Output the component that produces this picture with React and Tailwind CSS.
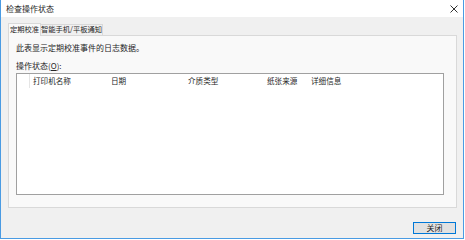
export default function App() {
  const columns = [
    { label: '打印机名称', w: 'w-[78px]' },
    { label: '日期', w: 'w-[77px]' },
    { label: '介质类型', w: 'w-[79px]' },
    { label: '纸张来源', w: 'w-[44px]' },
    { label: '详细信息', w: 'w-[60px]' },
  ];

  return (
    <div className="w-[465px] h-[240px] bg-white overflow-hidden font-['Noto_Sans_CJK_SC','Noto_Sans',sans-serif] text-[8px] leading-none text-[#262626]">
      <div className="w-[464px] h-[239px] flex flex-col bg-[#f0f0f0] border-x border-b border-[#4a9be3]">
        {/* title bar */}
        <div className="h-[17px] bg-white flex items-center justify-between pl-[5px] pr-[4px]">
          <span>检查操作状态</span>
          <svg width="8" height="8" viewBox="0 0 8 8" className="mr-[1px]">
            <path d="M0.5 0.5 L7.5 7.5 M7.5 0.5 L0.5 7.5" stroke="#333" strokeWidth="1" />
          </svg>
        </div>

        <div className="flex-1 flex flex-col px-[7px] pt-[5px]">
          {/* tabs */}
          <div className="flex items-end h-[13px] text-[7.3px] whitespace-nowrap">
            <div className="h-[13px] w-[33px] flex items-center justify-center bg-[#f9f9f9] border border-b-0 border-[#d9d9d9] relative top-[1px]">
              定期校准
            </div>
            <div className="h-[11px] w-[62px] flex items-center justify-center bg-[#f0f0f0] border border-b-0 border-l-0 border-[#d9d9d9]">
              智能手机/平板通知
            </div>
          </div>

          {/* tab page */}
          <div className="h-[173px] w-[449px] bg-[#f9f9f9] border border-[#d9d9d9] px-[7px] pt-[8px] flex flex-col">
            <p>此表显示定期校准事件的日志数据。</p>
            <p className="mt-[10px]">
              操作状态(<span className="underline">O</span>):
            </p>
            <div className="mt-[3px] w-[428px] h-[122px] bg-white border border-[#a0a0a0]">
              <div className="flex h-[14px] items-center text-[7.6px] whitespace-nowrap">
                <div className="w-[13px] h-full border-r border-[#e5e5e5]" />
                {columns.map((c) => (
                  <div key={c.label} className={`${c.w} pl-[3px] h-full flex items-center`}>
                    {c.label}
                  </div>
                ))}
              </div>
            </div>
          </div>

          {/* footer */}
          <div className="flex justify-end mt-[14px]">
            <button className="w-[43px] h-[12px] bg-[#e1e1e1] border border-[#0078d7] flex items-center justify-center">
              关闭
            </button>
          </div>
        </div>
      </div>
    </div>
  );
}
